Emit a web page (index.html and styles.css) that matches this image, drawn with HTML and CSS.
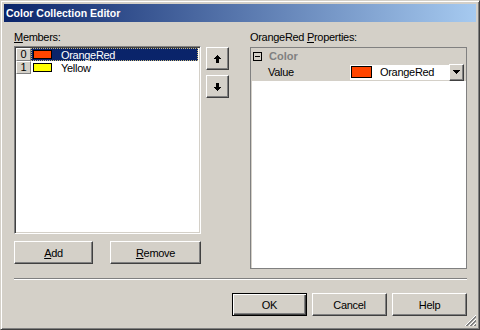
FILE: index.html
```html
<!DOCTYPE html>
<html lang="en">
<head>
  <meta charset="UTF-8">
  <title>Color Collection Editor</title>
  <link rel="stylesheet" href="styles.css">
</head>
<body>
  <div class="window">
    <div class="titlebar">Color Collection Editor</div>
    <div class="client">
      <div class="main">
        <div class="members">
          <div class="label"><u>M</u>embers:</div>
          <div class="listbox">
            <div class="item selected">
              <span class="index">0</span>
              <span class="row-body"><span class="swatch orangered"></span><span class="name">OrangeRed</span></span>
            </div>
            <div class="item">
              <span class="index">1</span>
              <span class="row-body"><span class="swatch yellow"></span><span class="name">Yellow</span></span>
            </div>
          </div>
          <div class="list-buttons">
            <button class="btn btn-add"><u>A</u>dd</button>
            <button class="btn btn-remove"><u>R</u>emove</button>
          </div>
        </div>

        <div class="order">
          <button class="btn arrow">
            <svg width="7" height="8" viewBox="0 0 7 8" shape-rendering="crispEdges"><path d="M3 0h1v1h1v1h1v1h1v1h-2v4h-3v-4h-2v-1h1v-1h1v-1h1z" fill="#000"/></svg>
          </button>
          <button class="btn arrow">
            <svg width="7" height="8" viewBox="0 0 7 8" shape-rendering="crispEdges"><path d="M3 8h1v-1h1v-1h1v-1h1v-1h-2v-4h-3v4h-2v1h1v1h1v1h1z" fill="#000"/></svg>
          </button>
        </div>

        <div class="properties">
          <div class="label">OrangeRed <u>P</u>roperties:</div>
          <div class="grid">
            <div class="category">
              <svg class="toggle" width="9" height="9" viewBox="0 0 9 9" shape-rendering="crispEdges"><rect x="0.5" y="0.5" width="8" height="8" fill="none" stroke="#000"/><path d="M2 4h5v1h-5z" fill="#000"/></svg>
              Color
            </div>
            <div class="prop">
              <span class="prop-name">Value</span>
              <span class="prop-value"><span class="swatch swatch-big orangered"></span>OrangeRed</span>
              <span class="btn dropdown">
                <svg width="7" height="4" viewBox="0 0 7 4" shape-rendering="crispEdges"><path d="M0 0h7v1h-1v1h-1v1h-1v1h-1v-1h-1v-1h-1v-1h-1z" fill="#000"/></svg>
              </span>
            </div>
          </div>
        </div>
      </div>

      <div class="separator"></div>

      <div class="dialog-buttons">
        <button class="btn btn-default">OK</button>
        <button class="btn">Cancel</button>
        <button class="btn">Help</button>
      </div>
    </div>

    <svg class="grip" width="12" height="12" viewBox="0 0 12 12">
      <path d="M12 1L1 12M12 5L5 12M12 9L9 12" stroke="#fff"/>
      <path d="M12 2L2 12M12 3L3 12M12 6L6 12M12 7L7 12M12 10L10 12M12 11L11 12" stroke="#808080"/>
    </svg>
  </div>
</body>
</html>
```

FILE: styles.css
```css
body {
  margin: 0;
  font-family: "Liberation Sans", Arial, sans-serif;
  font-size: 11px;
  color: #000;
}
.window {
  position: relative;
  width: 480px;
  height: 330px;
  box-sizing: border-box;
  background: #d4d0c8;
  border: 1px solid;
  border-color: #d4d0c8 #404040 #404040 #d4d0c8;
  box-shadow: inset 1px 1px #fff, inset -1px -1px #808080;
  padding: 3px;
  display: flex;
  flex-direction: column;
}
.titlebar {
  height: 18px;
  line-height: 18px;
  padding-left: 2px;
  color: #fff;
  font-weight: bold;
  font-size: 10.5px;
  background: linear-gradient(to right, #0a246a, #a6caf0);
}
.client {
  flex: 1;
  padding: 9px 9px 0 10px;
}
.main {
  display: flex;
  height: 238px;
}
.label {
  height: 13px;
  line-height: 13px;
  margin-bottom: 2px;
  white-space: nowrap;
  letter-spacing: -0.3px;
}

/* buttons */
.btn {
  box-sizing: border-box;
  width: 75px;
  height: 23px;
  padding: 0;
  font: inherit;
  letter-spacing: -0.3px;
  color: #000;
  background: #d4d0c8;
  border: 1px solid;
  border-color: #fff #404040 #404040 #fff;
  box-shadow: inset -1px -1px #808080;
}
.btn-default {
  border-color: #000;
  box-shadow: inset 1px 1px #fff, inset -1px -1px #404040, inset -2px -2px #808080;
}

/* members list */
.members {
  width: 187px;
  display: flex;
  flex-direction: column;
}
.listbox {
  height: 188px;
  box-sizing: border-box;
  background: #fff;
  border: 1px solid;
  border-color: #808080 #fff #fff #808080;
  box-shadow: inset 1px 1px #404040, inset -1px -1px #d4d0c8;
  padding: 1px;
}
.item {
  display: flex;
  height: 13px;
}
.index {
  width: 15px;
  box-sizing: border-box;
  background: #d4d0c8;
  border: 1px solid;
  border-color: #fff #808080 #808080 #fff;
  text-align: center;
  line-height: 11px;
}
.row-body {
  flex: 1;
  display: flex;
  align-items: center;
  margin-right: 1px;
  border: 1px solid transparent;
}
.selected .row-body {
  background: #0a246a;
  color: #fff;
  border: 1px dotted #c8b878;
}
.swatch {
  width: 19px;
  height: 9px;
  box-sizing: border-box;
  border: 1px solid #000;
  margin-left: 1px;
}
.orangered { background: #ff4500; }
.yellow { background: #ffff00; }
.name {
  margin-left: 9px;
  letter-spacing: -0.3px;
}
.list-buttons {
  display: flex;
  justify-content: space-between;
  margin-top: 7px;
}
.list-buttons .btn-add { width: 79px; }
.list-buttons .btn-remove { width: 91px; }

.order {
  margin-left: 5px;
  padding-top: 16px;
  display: flex;
  flex-direction: column;
  gap: 5px;
}
.order .arrow {
  width: 23px;
  height: 23px;
  display: flex;
  align-items: center;
  justify-content: center;
}

/* property grid */
.properties {
  margin-left: 21px;
  width: 217px;
  display: flex;
  flex-direction: column;
}
.properties .label {
  margin-bottom: 3px;
}
.grid {
  height: 222px;
  box-sizing: border-box;
  background: #fff;
  border: 1px solid #808080;
  box-shadow: inset 1px 1px #d4d0c8;
  padding: 1px 0 0 1px;
}
.category {
  height: 14px;
  display: flex;
  align-items: center;
  background: #d4d0c8;
  color: #808080;
  font-weight: bold;
}
.toggle {
  margin: 0 7px 0 1px;
}
.prop {
  height: 18px;
  display: flex;
  align-items: center;
  background: #d4d0c8;
}
.prop-name {
  width: 98px;
  box-sizing: border-box;
  padding-left: 16px;
  letter-spacing: -0.3px;
}
.prop-value {
  width: 99px;
  height: 15px;
  display: flex;
  align-items: center;
  background: #fff;
  letter-spacing: -0.3px;
}
.swatch-big {
  width: 21px;
  height: 12px;
  margin-right: 8px;
}
.prop .dropdown {
  width: 15px;
  height: 17px;
  display: flex;
  align-items: center;
  justify-content: center;
}

.separator {
  margin-top: 9px;
  border-top: 1px solid #808080;
  border-bottom: 1px solid #fff;
}
.dialog-buttons {
  display: flex;
  justify-content: flex-end;
  gap: 5px;
  margin-top: 13px;
}
.grip {
  position: absolute;
  right: 3px;
  bottom: 3px;
}
```
